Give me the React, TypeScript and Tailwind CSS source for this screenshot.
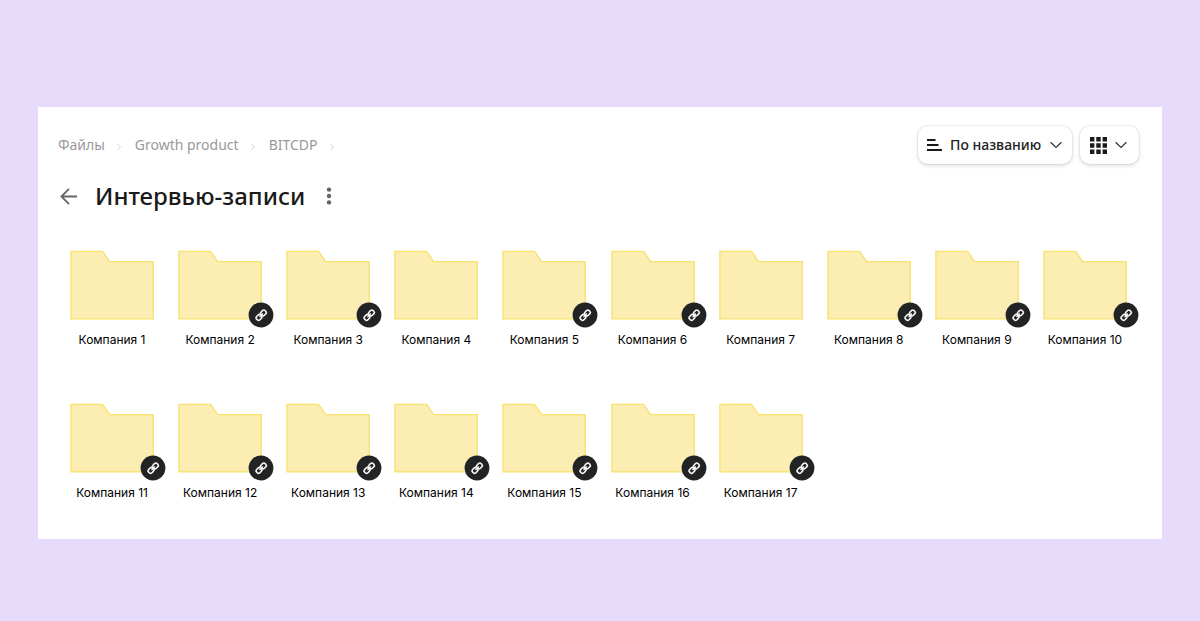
import React from "react";

type Folder = { name: string; shared: boolean };

const privateFolders = [1, 4, 7];

const folders: Folder[] = Array.from({ length: 17 }, (_, i) => ({
  name: `Компания ${i + 1}`,
  shared: !privateFolders.includes(i + 1),
}));

const crumbs = ["Файлы", "Growth product", "BITCDP"];

function CrumbArrow() {
  return (
    <svg className="mt-1 h-2 w-1.5" viewBox="0 0 6 8" fill="none" stroke="#d4d4d4" aria-hidden="true">
      <path d="M0.5 1 3.5 4 0.5 7" />
    </svg>
  );
}

function ChevronDown() {
  return (
    <svg className="h-2 w-3 shrink-0" viewBox="0 0 12 8" fill="none" stroke="#333" strokeWidth="1.2" aria-hidden="true">
      <path d="M0.6 1.2 6 6.4 11.4 1.2" />
    </svg>
  );
}

function LinkBadge() {
  return (
    <svg className="absolute -right-3 -bottom-2 size-[26px]" viewBox="0 0 26 26" fill="none" aria-hidden="true">
      <circle cx="13" cy="13" r="12.4" fill="#222325" />
      <g transform="translate(13.2 13.2) rotate(-45)" stroke="#f4f4f4" strokeWidth="1.6">
        <rect x="-6" y="-2.3" width="5.7" height="4.6" rx="1.9" />
        <rect x="0.3" y="-2.3" width="5.7" height="4.6" rx="1.9" />
        <path d="M-2.4 0H2.4" strokeWidth="1.4" />
      </g>
    </svg>
  );
}

function FolderItem({ name, shared }: Folder) {
  return (
    <li>
      <a href="#" className="flex flex-col items-center">
        <span className="relative block">
          <svg className="block h-[70px] w-[84px]" viewBox="0 0 84 70" aria-hidden="true">
            <path
              d="M0.9 1.3H32.6L39.6 11.6H83.2V68.9H0.9Z"
              fill="#fceeb3"
              stroke="#f8e16c"
              strokeWidth="1.3"
            />
          </svg>
          {shared && <LinkBadge />}
        </span>
        <span className="mt-2.5 text-[12px] leading-5 whitespace-nowrap text-black">{name}</span>
      </a>
    </li>
  );
}

export default function App() {
  return (
    <div className="min-h-screen bg-[#e6dbfb] px-[38px] pt-[107px] pb-20 font-['Inter','Liberation_Sans',sans-serif]">
      <main className="bg-white pt-[19px] pr-[23px] pb-9 pl-5">
        <header className="font-['Noto_Sans','Open_Sans',sans-serif]">
          <div className="flex items-center justify-between">
            <nav aria-label="Путь">
              <ol className="flex items-center gap-3 text-[14px] leading-5 text-[#999]">
                {crumbs.map((crumb) => (
                  <li key={crumb} className="flex items-center gap-3">
                    <a href="#">{crumb}</a>
                    <CrumbArrow />
                  </li>
                ))}
              </ol>
            </nav>
            <div className="flex gap-2">
              <label className="flex h-[38px] items-center gap-2 rounded-[10px] bg-white pr-2.5 pl-2 shadow-[0_0_1px_1px_rgba(0,0,0,0.06),0_2px_4px_rgba(0,0,0,0.12)]">
                <svg className="size-4 shrink-0" viewBox="0 0 16 16" stroke="#1a1a1a" strokeWidth="2" aria-hidden="true">
                  <path d="M1 3H9.5M1 8H12.5M1 13H16" />
                </svg>
                <select
                  aria-label="Сортировка"
                  className="appearance-none bg-transparent text-[14px] leading-5 font-medium text-[#222] outline-none"
                >
                  <option>По названию</option>
                </select>
                <ChevronDown />
              </label>
              <button
                type="button"
                aria-label="Вид"
                className="flex h-[38px] items-center gap-2 rounded-[10px] bg-white pr-3 pl-2.5 shadow-[0_0_1px_1px_rgba(0,0,0,0.06),0_2px_4px_rgba(0,0,0,0.12)]"
              >
                <svg className="h-[17px] w-[17px]" viewBox="0 0 17 17" fill="#1a1a1a" aria-hidden="true">
                  <path d="M0 0h4.4v4.4H0zM6.3 0h4.4v4.4H6.3zM12.6 0H17v4.4h-4.4zM0 6.3h4.4v4.4H0zM6.3 6.3h4.4v4.4H6.3zM12.6 6.3H17v4.4h-4.4zM0 12.6h4.4V17H0zM6.3 12.6h4.4V17H6.3zM12.6 12.6H17V17h-4.4z" />
                </svg>
                <ChevronDown />
              </button>
            </div>
          </div>
          <div className="mt-3.5 flex items-center">
            <button type="button" aria-label="Назад" className="p-0.5">
              <svg className="h-[17px] w-[17px]" viewBox="0 0 17 17" fill="none" stroke="#666" strokeWidth="1.8" aria-hidden="true">
                <path d="M17 8.5H1.5M9 0.9 1.4 8.5 9 16.1" />
              </svg>
            </button>
            <h1 className="ml-4 text-[24px] leading-9 font-medium text-[#1a1a1a]">Интервью-записи</h1>
            <button type="button" aria-label="Ещё" className="ml-5">
              <svg className="h-[18px] w-2" viewBox="0 0 8 18" fill="#666" aria-hidden="true">
                <circle cx="4" cy="2.6" r="2.2" />
                <circle cx="4" cy="9" r="2.2" />
                <circle cx="4" cy="15.4" r="2.2" />
              </svg>
            </button>
          </div>
        </header>
        <ul className="mt-9 grid grid-cols-10 gap-y-[53px]">
          {folders.map((folder) => (
            <FolderItem key={folder.name} {...folder} />
          ))}
        </ul>
      </main>
    </div>
  );
}
